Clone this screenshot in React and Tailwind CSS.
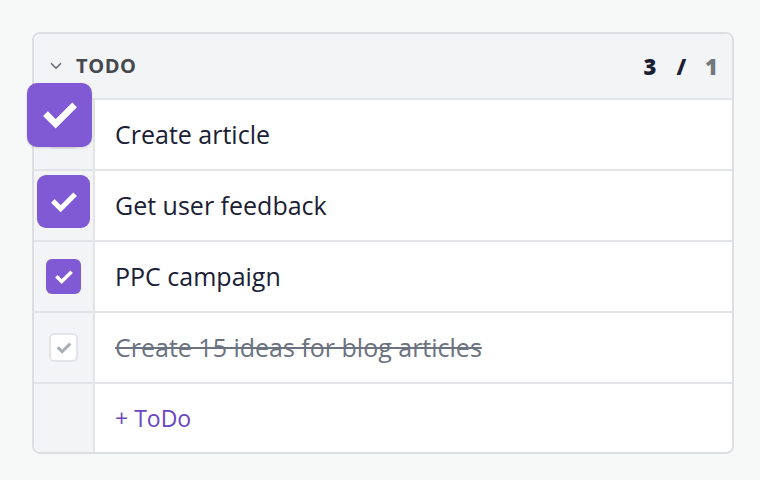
import React from 'react';

const font = { fontFamily: '"Open Sans", "Noto Sans", sans-serif' };

function Check({ className }) {
  return (
    <svg viewBox="0 0 24 24" className={className} fill="none" stroke="currentColor" strokeWidth="3.8" strokeLinecap="square">
      <path d="M5 12.5l4.5 4.5L19 7.5" />
    </svg>
  );
}

const todos = [
  { id: 1, text: 'Create article', box: 'empty' },
  { id: 2, text: 'Get user feedback', box: 'big' },
  { id: 3, text: 'PPC campaign', box: 'mid' },
  { id: 4, text: 'Create 15 ideas for blog articles', box: 'done' },
];

function Box({ kind }) {
  if (kind === 'big') {
    return (
      <div className="w-[53px] h-[53px] -mt-2 rounded-[9px] bg-[#805ad5] flex items-center justify-center text-white">
        <Check className="w-8 h-8" />
      </div>
    );
  }
  if (kind === 'mid') {
    return (
      <div className="w-[35px] h-[35px] rounded-[6px] bg-[#805ad5] flex items-center justify-center text-white">
        <Check className="w-[22px] h-[22px]" />
      </div>
    );
  }
  if (kind === 'done') {
    return (
      <div className="w-[29px] h-[29px] rounded-[5px] border-2 border-[#e2e4e8] bg-white flex items-center justify-center text-[#a8adb5]">
        <Check className="w-[18px] h-[18px]" />
      </div>
    );
  }
  return <div className="w-[29px] h-[29px] rounded-[5px] border-2 border-[#e2e4e8] bg-white" />;
}

export default function App() {
  return (
    <div className="w-[760px] h-[480px] bg-[#f7f8f8] pt-8 pl-8" style={font}>
      <div className="relative w-[702px] rounded-lg border-2 border-[#dcdee2] bg-white overflow-visible">
        <div className="h-[66px] bg-[#f3f4f6] rounded-t-lg flex items-center pl-[13px] pr-[14px] border-b-2 border-[#e2e4e8]">
          <svg viewBox="0 0 24 24" className="w-[18px] h-[18px] text-[#666b73]" fill="none" stroke="currentColor" strokeWidth="2.2" strokeLinecap="round" strokeLinejoin="round">
            <path d="M6 9l6 6 6-6" />
          </svg>
          <span className="ml-[11px] text-[20px] font-bold tracking-[0.03em] text-[#45484d]">TODO</span>
          <div className="ml-auto flex items-center text-[22px] font-extrabold">
            <span className="text-[#1c2033]">3</span>
            <span className="text-[#1c2033] ml-[20px]">/</span>
            <span className="text-[#74787e] ml-[19px]">1</span>
          </div>
        </div>
        {todos.map((t) => (
          <div key={t.id} className="flex h-[71px] border-b-2 border-[#e2e4e8]">
            <div className="w-[61px] bg-[#f3f4f6] border-r-2 border-[#e2e4e8] flex items-center justify-center">
              <Box kind={t.box} />
            </div>
            <div className="flex-1 flex items-center pl-5">
              <span
                className={
                  t.box === 'done'
                    ? 'text-[25px] text-[#6b7280] line-through decoration-[#6b7280] decoration-2'
                    : 'text-[25px] text-[#1a2035]'
                }
              >
                {t.text}
              </span>
            </div>
          </div>
        ))}
        <div className="flex h-[68px]">
          <div className="w-[61px] bg-[#f3f4f6] border-r-2 border-[#e2e4e8] rounded-bl-lg" />
          <div className="flex-1 flex items-center pl-5">
            <span className="text-[23px] text-[#6b46c1]">+ ToDo</span>
          </div>
        </div>
        <div className="absolute left-[-7px] top-[49px] w-[65px] h-[64px] rounded-[10px] bg-[#805ad5] flex items-center justify-center text-white shadow-sm">
          <Check className="w-[42px] h-[42px]" />
        </div>
      </div>
    </div>
  );
}
